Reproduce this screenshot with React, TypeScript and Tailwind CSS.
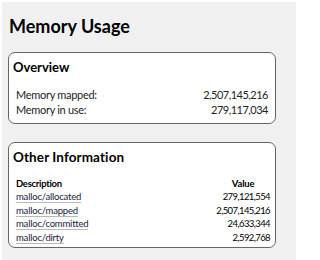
import React from 'react';

const font = { fontFamily: 'Lato, "Open Sans", sans-serif' };

const overview = [
  { label: 'Memory mapped:', value: '2,507,145,216' },
  { label: 'Memory in use:', value: '279,117,034' },
];

const other = [
  { name: 'malloc/allocated', value: '279,121,554' },
  { name: 'malloc/mapped', value: '2,507,145,216' },
  { name: 'malloc/committed', value: '24,633,344' },
  { name: 'malloc/dirty', value: '2,592,768' },
];

export default function App() {
  return (
    <div className="w-[300px] h-[260px] bg-white pt-[2px] pl-[2px] pr-[4px] text-black" style={font}>
      <div className="w-[294px] h-[258px] bg-[#f0f0f0] px-[6px] pt-[13px]">
        <h1 className="text-[18px] leading-[22px] font-bold pl-[1px]">Memory Usage</h1>

        <section className="mt-[15px] w-[268px] h-[72px] bg-white border border-[#666] rounded-[7px] px-[4px] pt-[5px]">
          <h2 className="text-[13px] leading-[18px] font-bold">Overview</h2>
          <div className="mt-[11px] px-[3px] text-[11px] leading-[15px] text-[#222]">
            {overview.map(r => (
              <div key={r.label} className="flex justify-between">
                <span className="tracking-[-0.3px]">{r.label}</span>
                <span className="tracking-[-0.5px]">{r.value}</span>
              </div>
            ))}
          </div>
        </section>

        <section className="mt-[18px] w-[268px] h-[106px] bg-white border border-[#666] rounded-[7px] px-[4px] pt-[5px]">
          <h2 className="text-[13.5px] leading-[18px] font-bold tracking-[0.1px]">Other Information</h2>
          <table className="mt-[11px] ml-[3px] w-[254px] text-[9.5px] leading-[13.4px]">
            <thead>
              <tr>
                <th className="text-left font-bold tracking-[-0.3px]">Description</th>
                <th className="text-center font-bold w-[50px] tracking-[-0.2px]">Value</th>
              </tr>
            </thead>
            <tbody>
              {other.map(r => (
                <tr key={r.name}>
                  <td className="py-0">
                    <span className="text-[#1a1a40] border-b border-[#b8b8b8] tracking-[-0.2px]">{r.name}</span>
                  </td>
                  <td className="text-right tracking-[-0.6px]">{r.value}</td>
                </tr>
              ))}
            </tbody>
          </table>
        </section>
      </div>
    </div>
  );
}
